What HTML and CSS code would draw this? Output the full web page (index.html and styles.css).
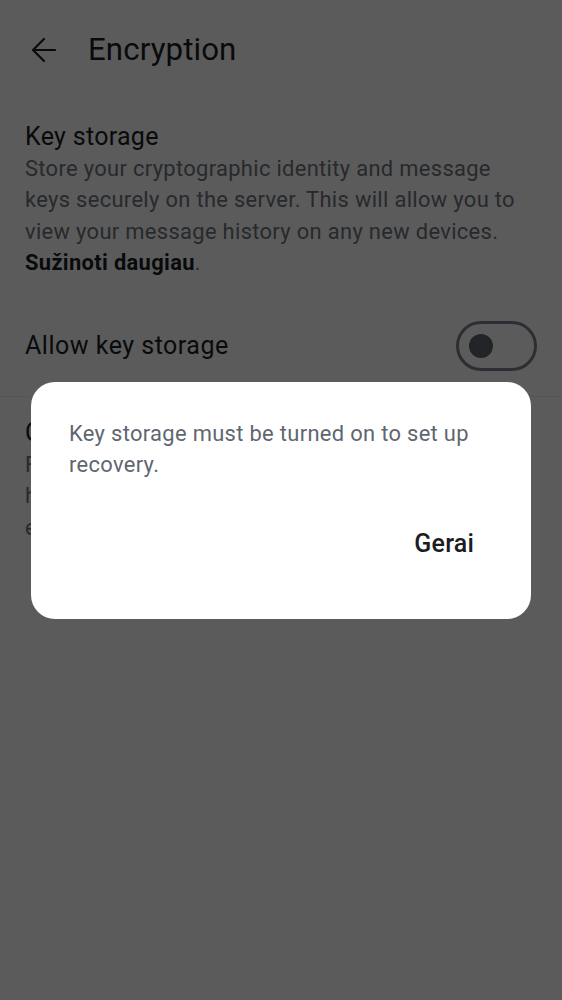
FILE: index.html
```html
<!DOCTYPE html>
<html lang="en">
<head>
<meta charset="utf-8">
<title>Encryption</title>
<link rel="stylesheet" href="styles.css">
</head>
<body>
<div class="screen">
  <header class="topbar">
    <button class="back" aria-label="Back">
      <svg width="24" height="24" viewBox="0 0 24 24" fill="none" stroke="#1b1d22" stroke-width="2.2" stroke-linecap="round" stroke-linejoin="round"><path d="M1 12H23M12 1L1 12L12 23"/></svg>
    </button>
    <h1 class="title">Encryption</h1>
  </header>

  <section class="section">
    <h2 class="section-title">Key storage</h2>
    <p class="desc">Store your cryptographic identity and message keys securely on the server. This will allow you to view your message history on any new devices. <b class="link">Sužinoti daugiau</b>.</p>
  </section>

  <div class="row">
    <span class="row-label">Allow key storage</span>
    <span class="switch"><span class="knob"></span></span>
  </div>
  <div class="divider"></div>

  <section class="section section-2">
    <h2 class="section-title">Change recovery key</h2>
    <p class="desc">Forgot your recovery key? You can reset it and<br>have your message history restored on any<br>existing or new device.</p>
  </section>
</div>

<div class="scrim">
  <div class="dialog" role="dialog">
    <p class="dialog-text">Key storage must be turned on to set up recovery.</p>
    <div class="actions">
      <button class="text-btn">Gerai</button>
    </div>
  </div>
</div>
</body>
</html>
```

FILE: styles.css
```css
* { box-sizing: border-box; }
html, body { margin: 0; padding: 0; }
body {
  width: 562px;
  height: 1000px;
  background: #ffffff;
  font-family: Roboto, "Liberation Sans", sans-serif;
  color: #1b1d22;
  overflow: hidden;
}
.screen { width: 562px; }

.topbar {
  height: 100px;
  display: flex;
  align-items: center;
  padding-left: 24px;
  gap: 24px;
}
.back {
  width: 40px;
  height: 40px;
  border: 0;
  padding: 0;
  background: none;
  display: flex;
  align-items: center;
  justify-content: center;
}
.title {
  margin: 0;
  font-size: 31.25px;
  line-height: 40px;
  font-weight: 400;
  letter-spacing: 0.1px;
}

.section { padding: 21px 25px 0; }
.section-2 { padding-top: 20px; }
.section-title {
  margin: 0;
  font-size: 25px;
  line-height: 32px;
  font-weight: 400;
  letter-spacing: 0.3px;
}
.desc {
  margin: 0;
  font-size: 21.9px;
  line-height: 31.25px;
  letter-spacing: 0.33px;
  color: #6e747d;
}
.link { color: #1b1d22; font-weight: 700; }

.row {
  padding: 43px 25px 25px;
  display: flex;
  align-items: center;
  justify-content: space-between;
}
.row-label {
  font-size: 25px;
  letter-spacing: 0.5px;
  line-height: 32px;
}
.switch {
  width: 81px;
  height: 50px;
  border: 3px solid #7a828c;
  border-radius: 25px;
  display: flex;
  align-items: center;
  padding-left: 10px;
}
.knob {
  width: 24px;
  height: 24px;
  border-radius: 50%;
  background: #5f6670;
}
.divider { height: 1px; background: #eceef1; }

.scrim {
  position: fixed;
  inset: 0;
  background: rgba(0, 0, 0, 0.643);
  display: flex;
  align-items: center;
  justify-content: center;
}
.dialog {
  width: 500px;
  height: 237px;
  background: #ffffff;
  border-radius: 24px;
  padding: 36px 38px 0;
  display: flex;
  flex-direction: column;
}
.dialog-text {
  margin: 0;
  font-size: 21.9px;
  line-height: 31.25px;
  letter-spacing: 0.33px;
  color: #5f6670;
}
.actions {
  margin-top: 32px;
  display: flex;
  justify-content: flex-end;
}
.text-btn {
  height: 62px;
  padding: 0 19px;
  border: 0;
  background: none;
  font-family: Roboto, "Liberation Sans", sans-serif;
  font-size: 25px;
  font-weight: 500;
  letter-spacing: 0.2px;
  color: #1b1d22;
}
```
